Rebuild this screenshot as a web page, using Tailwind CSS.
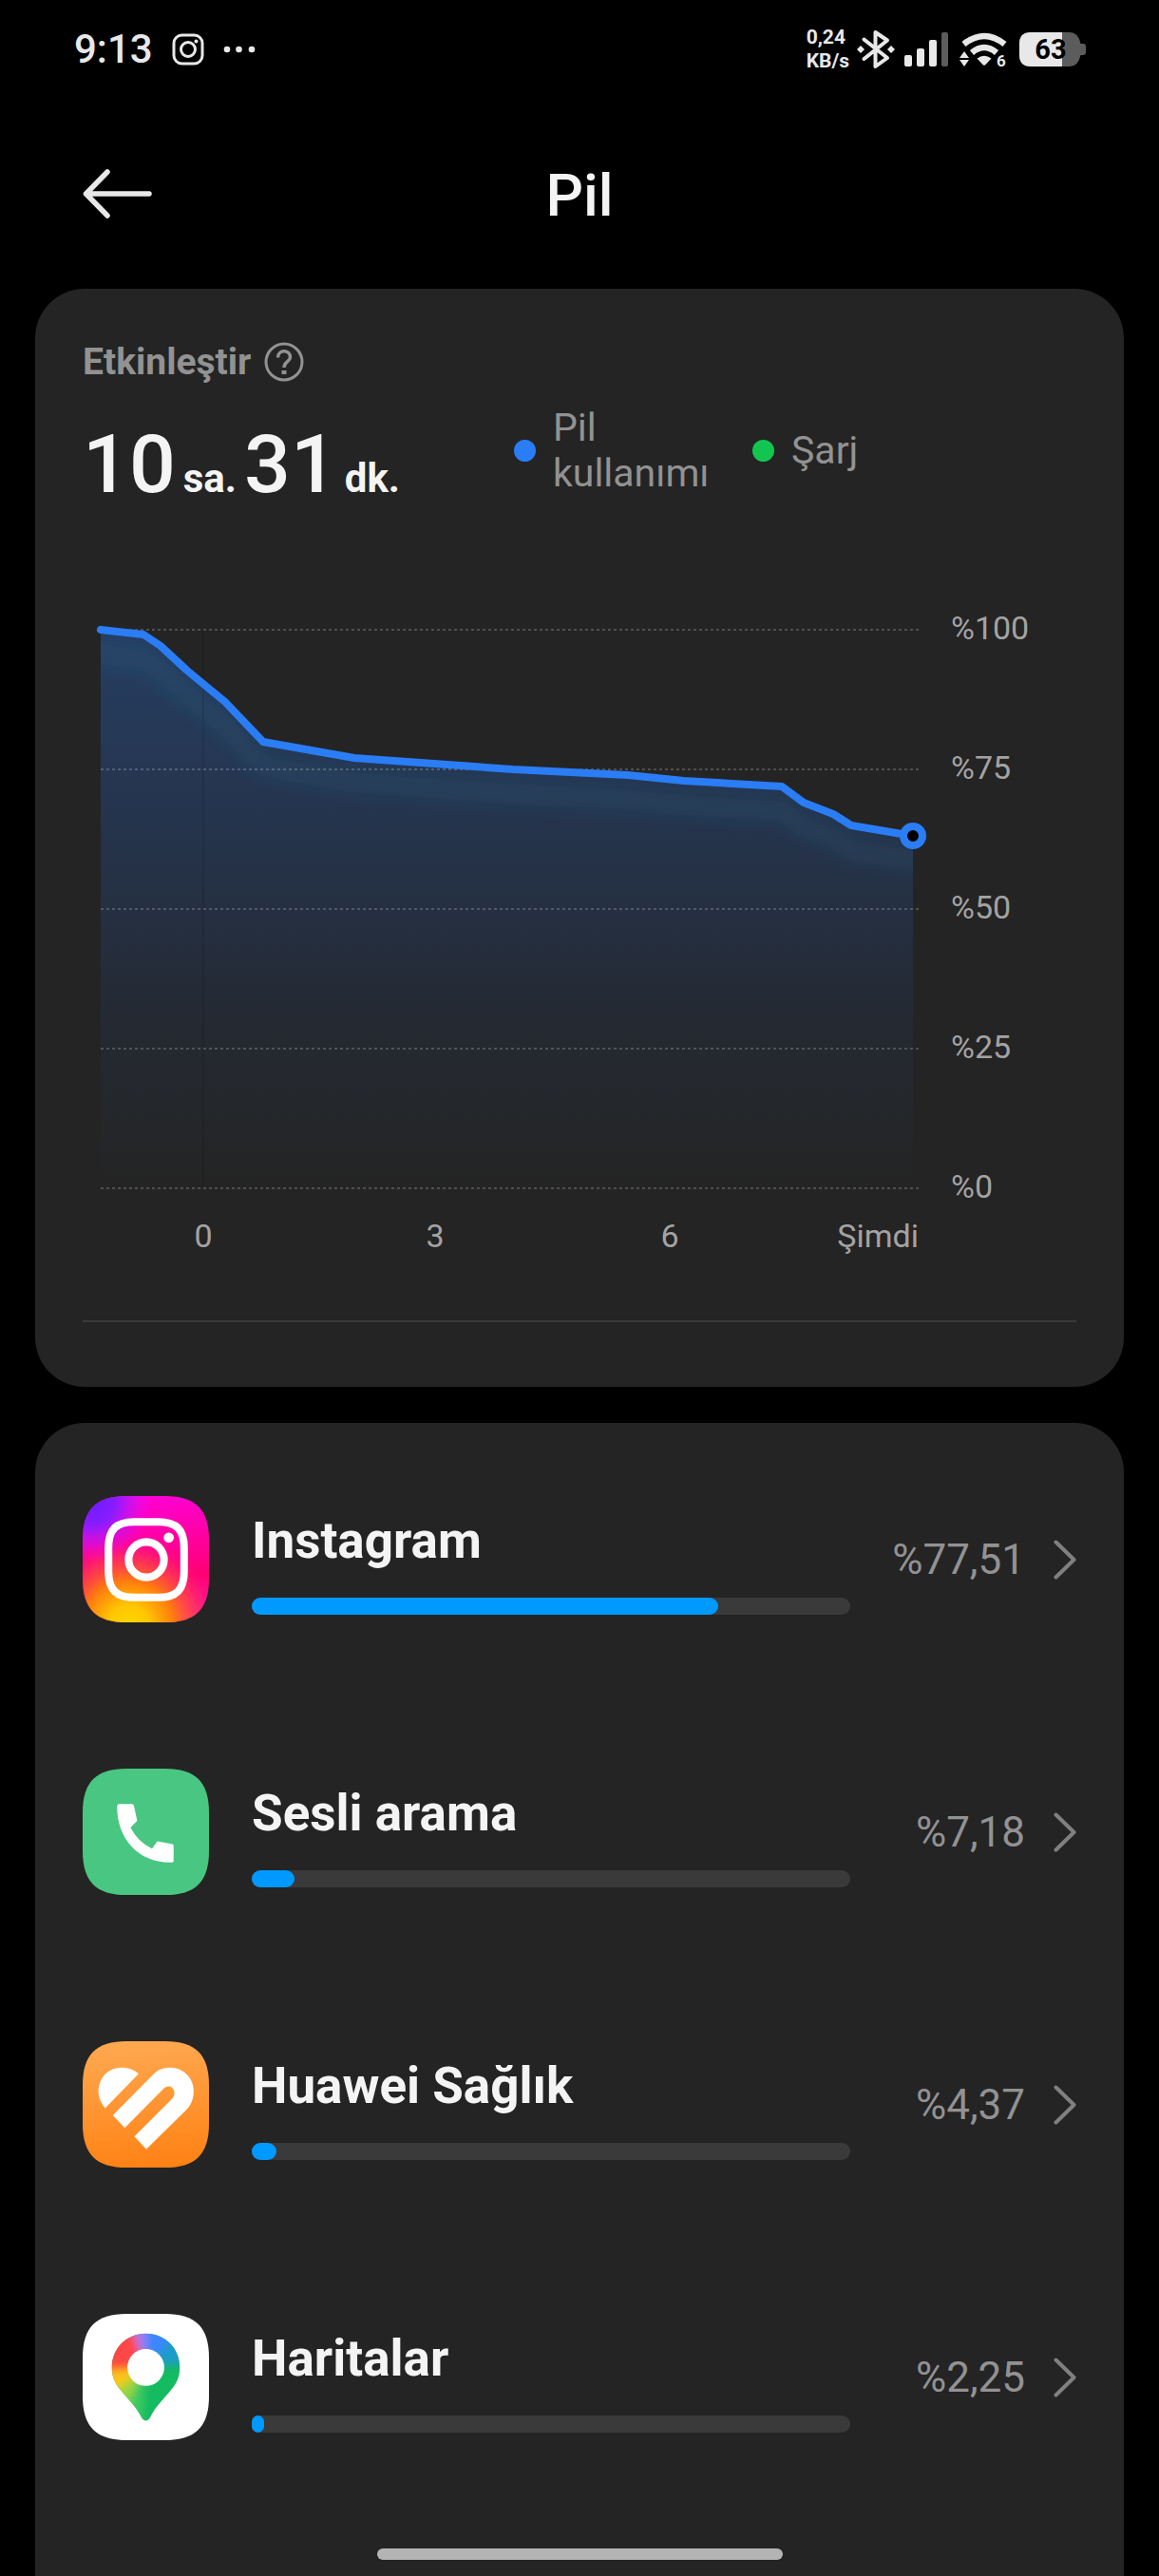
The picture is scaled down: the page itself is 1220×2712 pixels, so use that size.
<!DOCTYPE html>
<html lang="tr">
<head>
  <meta charset="UTF-8">
  <meta name="viewport" content="width=device-width, initial-scale=1.0">
  <title>Pil</title>
  <script src="https://cdn.jsdelivr.net/npm/@tailwindcss/browser@4"></script>
</head>
<body class="h-screen overflow-hidden bg-black font-[Roboto,sans-serif] text-[#f4f4f4] flex flex-col">

  <!-- STATUS BAR -->
  <div class="h-[104px] shrink-0 flex items-center pl-[78px] pr-[77px] text-[#e8e8e8]">
    <span class="text-[42px] leading-none font-medium">9:13</span>
    <svg class="ml-5 size-[34px]" viewBox="0 0 34 34" fill="none" stroke="currentColor" stroke-width="3">
      <rect x="2" y="2" width="30" height="30" rx="8.5"/>
      <circle cx="17" cy="17" r="7.5"/>
      <circle cx="25.500" cy="8.500" r="2" fill="currentColor" stroke="none"/>
    </svg>
    <svg class="ml-5 w-[34px] h-2" viewBox="0 0 34 8" fill="currentColor">
      <circle cx="4" cy="4" r="3.300"/><circle cx="16.500" cy="4" r="3.300"/><circle cx="30" cy="4" r="3.300"/>
    </svg>
    <div class="ml-auto flex items-center">
      <div class="text-[21px] leading-[25px] font-bold">
        <div>0,24</div>
        <div>KB/s</div>
      </div>
      <svg class="ml-2 w-10 h-[44px]" viewBox="0 0 40 44" fill="none" stroke="currentColor" stroke-width="4" stroke-linejoin="round" stroke-linecap="round">
        <path d="M7.500 11.500L32 31 19.500 40V4L32 12.500 7.500 32"/>
        <path d="M4 18l4 4-4 4-4-4zM36 18l4 4-4 4-4-4z" fill="currentColor" stroke="none"/>
      </svg>
      <svg class="ml-[10px] w-[46px] h-9" viewBox="0 0 46 36" fill="currentColor">
        <rect x="0" y="24" width="8" height="12" rx="2"/>
        <rect x="13" y="17" width="8" height="19" rx="2"/>
        <rect x="26" y="8" width="8" height="28" rx="2"/>
        <rect x="39" y="0" width="7" height="36" rx="2" fill="#5c5c5c"/>
      </svg>
      <svg class="ml-3 w-[50px] h-9 overflow-visible" viewBox="0 0 50 36" fill="currentColor">
        <path d="M4.500 12.500Q26 -4.500 47.500 12.500" fill="none" stroke="currentColor" stroke-width="6.500"/>
        <path d="M13 21.500Q26 10.500 39 21.500" fill="none" stroke="currentColor" stroke-width="6.500"/>
        <path d="M18.500 27.500Q26 22 33.500 27.500L28 33.500Q26 36 24 33.500Z"/>
        <path d="M5 20l5 7H0zM5 36l5-7H0z"/>
        <text x="39" y="36" font-size="17" font-weight="700">6</text>
      </svg>
      <div class="relative ml-[13px] w-[70px] h-9">
        <svg class="w-full h-full" viewBox="0 0 70 36">
          <path d="M12 0H53Q62 0 64.500 12H67Q70 12 70 15V21Q70 24 67 24H64.500Q62 36 53 36H12Q0 36 0 24V12Q0 0 12 0Z" fill="#5c5c5c"/>
          <path d="M12 0H45V36H12Q0 36 0 24V12Q0 0 12 0Z" fill="#e8e8e8"/>
        </svg>
        <span class="absolute inset-0 pr-1 flex items-center justify-center text-[29px] leading-none font-bold text-black">63</span>
      </div>
    </div>
  </div>

  <!-- HEADER -->
  <header class="h-[200px] shrink-0 px-[87px] grid grid-cols-3 items-center">
    <button type="button" aria-label="Geri" class="w-[74px] h-[52px]">
      <svg class="w-full h-full" viewBox="0 0 74 52" fill="none" stroke="#e8e8e8" stroke-width="5.500" stroke-linecap="round" stroke-linejoin="round">
        <path d="M26 3L3.500 26 26 49M3.500 26H70"/>
      </svg>
    </button>
    <h1 class="pt-1 text-center text-[62px] leading-none font-medium">Pil</h1>
  </header>

  <main class="grow min-h-0 px-[37px] flex flex-col gap-[38px]">

    <!-- GRAFIK -->
    <section class="shrink-0 rounded-[52px] bg-[#242424] px-[50px] pt-[52px] pb-[68px]">
      <div class="flex items-center gap-[14px] text-[#929292]">
        <h2 class="text-[39px] leading-[50px] font-bold">Etkinleştir</h2>
        <button type="button" aria-label="Yardım">
          <svg class="size-[42px]" viewBox="0 0 42 42" fill="none" stroke="currentColor" stroke-width="3">
            <circle cx="21" cy="21" r="19"/>
            <path d="M14.500 16.500C14.500 7.500 27.500 7.500 27.500 16C27.500 21 21 20.500 21 27" stroke-width="3.500"/>
            <path d="M18.500 30h5v4h-5z" fill="currentColor" stroke="none"/>
          </svg>
        </button>
      </div>

      <div class="mt-2 h-[120px] flex items-center">
        <p class="w-[454px] pt-8 flex items-baseline font-bold text-[42px] whitespace-nowrap">
          <span class="text-[86px] leading-none font-medium">10</span>
          <span class="ml-2">sa.</span>
          <span class="ml-2 text-[86px] leading-none font-medium">31</span>
          <span class="ml-2">dk.</span>
        </p>
        <div class="flex items-center text-[41px] leading-[48px] text-[#929292]">
          <span class="size-[23px] rounded-full bg-[#2a7df5]"></span>
          <span class="ml-[18px] w-[210px]">Pil kullanımı</span>
          <span class="size-[23px] rounded-full bg-[#13c550]"></span>
          <span class="ml-[18px]">Şarj</span>
        </div>
      </div>

      <svg class="mt-[106px] w-full h-auto" viewBox="0 0 1046 690" font-size="34" fill="#a3a3a3">
        <defs>
          <linearGradient id="fill" x1="0" y1="23" x2="0" y2="611" gradientUnits="userSpaceOnUse">
            <stop offset="0" stop-color="#2a7df5" stop-opacity=".3"/>
            <stop offset=".4" stop-color="#2a74f0" stop-opacity=".18"/>
            <stop offset=".7" stop-color="#2a74f0" stop-opacity=".07"/>
            <stop offset="1" stop-color="#2a7df5" stop-opacity="0"/>
          </linearGradient>
          <clipPath id="area">
            <path d="M19 23L64 28 82 40 110 66 150 99 190 141 286 158 453 170 574 176 633 182 736 188 759 205 790 217 809 229 874 240V611H19Z"/>
          </clipPath>
          <filter id="soft" x="-10%" y="-30%" width="120%" height="160%"><feGaussianBlur stdDeviation="9"/></filter>
        </defs>
        <path d="M19 23L64 28 82 40 110 66 150 99 190 141 286 158 453 170 574 176 633 182 736 188 759 205 790 217 809 229 874 240V611H19Z" fill="url(#fill)"/>
        <g clip-path="url(#area)">
          <path transform="translate(0 26)" d="M-20 20L19 23 64 28 82 40 110 66 150 99 190 141 286 158 453 170 574 176 633 182 736 188 759 205 790 217 809 229 874 240 900 244" fill="none" stroke="#287090" stroke-opacity=".2" stroke-width="20" filter="url(#soft)"/>
        </g>
        <path d="M127 23V611" stroke="#000" stroke-opacity=".2" stroke-width="1"/>
        <path d="M19 23H880M19 170H880M19 317H880M19 464H880M19 611H880" stroke="#fff" stroke-opacity=".2" stroke-width="2" stroke-dasharray="3 3"/>
        <path d="M19 23L64 28 82 40 110 66 150 99 190 141 286 158 453 170 574 176 633 182 736 188 759 205 790 217 809 229 874 240" fill="none" stroke="#2a7df5" stroke-width="8" stroke-linecap="round" stroke-linejoin="round"/>
        <circle cx="874" cy="240" r="10" fill="#000" stroke="#2a7df5" stroke-width="8"/>
        <text x="914" y="33">%100</text>
        <text x="914" y="180">%75</text>
        <text x="914" y="327">%50</text>
        <text x="914" y="474">%25</text>
        <text x="914" y="621">%0</text>
        <g text-anchor="middle">
          <text x="127" y="673">0</text>
          <text x="371" y="673">3</text>
          <text x="618" y="673">6</text>
        </g>
        <text x="880" y="673" text-anchor="end">Şimdi</text>
      </svg>
      <hr class="mt-[60px] border-t-2 border-[#3a3a3a]">
    </section>

    <!-- UYGULAMALAR -->
    <section class="grow min-h-0 overflow-hidden rounded-t-[52px] bg-[#242424] px-[50px]">
      <ul>
        <li>
          <a href="#" class="h-[287px] flex items-center">
            <svg class="size-[133px] shrink-0" viewBox="0 0 132 132">
              <defs>
                <clipPath id="tile"><path d="M0 46C0 14 14 0 46 0H86C118 0 132 14 132 46V86C132 118 118 132 86 132H46C14 132 0 118 0 86Z"/></clipPath>
                <linearGradient id="igBase" x1=".6" y1="0" x2=".7" y2="1">
                  <stop offset="0" stop-color="#ff00d4"/><stop offset=".65" stop-color="#ff0073"/><stop offset="1" stop-color="#ff1fb0"/>
                </linearGradient>
                <radialGradient id="igWarm" cx="48" cy="136" r="96" gradientUnits="userSpaceOnUse">
                  <stop offset="0" stop-color="#ffd600"/><stop offset=".22" stop-color="#ffc800"/><stop offset=".5" stop-color="#ff7a10"/><stop offset=".75" stop-color="#ff3a50" stop-opacity=".7"/><stop offset="1" stop-color="#ff0080" stop-opacity="0"/>
                </radialGradient>
                <radialGradient id="igCool" cx="10" cy="6" r="62" gradientUnits="userSpaceOnUse">
                  <stop offset="0" stop-color="#6a1cff"/><stop offset=".4" stop-color="#8a1cff"/><stop offset="1" stop-color="#e015ff" stop-opacity="0"/>
                </radialGradient>
              </defs>
              <g clip-path="url(#tile)">
                <path d="M0 0h132v132H0z" fill="url(#igBase)"/>
                <path d="M0 0h132v132H0z" fill="url(#igWarm)"/>
                <path d="M0 0h132v132H0z" fill="url(#igCool)"/>
              </g>
              <path d="M54 27H79C98 27 106 35 106 54V79C106 98 98 106 79 106H54C35 106 27 98 27 79V54C27 35 35 27 54 27Z" fill="none" stroke="#fff" stroke-width="8"/>
              <circle cx="66.500" cy="66.500" r="18.500" fill="none" stroke="#fff" stroke-width="8"/>
              <circle cx="90" cy="43.500" r="5.300" fill="#fff"/>
            </svg>
            <div class="ml-[45px] grow">
              <h3 class="text-[53px] leading-[76px] font-bold">Instagram</h3>
              <div class="mt-[22px] h-[18px] rounded-full bg-[#3a3a3a]"><div class="h-full rounded-full bg-[#0099ff]" style="width:78%"></div></div>
            </div>
            <span class="w-[184px] shrink-0 text-right text-[44px] text-[#929292]">%77,51</span>
            <svg class="ml-[30px] w-6 h-[42px] shrink-0" viewBox="0 0 24 42" fill="none" stroke="#808080" stroke-width="4" stroke-linecap="round" stroke-linejoin="round"><path d="M2.500 2.500L21.500 21 2.500 39.500"/></svg>
          </a>
        </li>
        <li>
          <a href="#" class="h-[287px] flex items-center">
            <svg class="size-[133px] shrink-0" viewBox="0 0 132 132">
              <path d="M0 46C0 14 14 0 46 0H86C118 0 132 14 132 46V86C132 118 118 132 86 132H46C14 132 0 118 0 86Z" fill="#49c681"/>
              <path d="M38 37H51.500Q53 37 53.500 38.500L57 54.500 50 61.500Q58 77 72.500 83.500L78 76 94 79Q95 79.500 95 81V96.500Q95 98 93 98C59 99 36 74 36 40Q36 37 38 37Z" fill="#fff"/>
            </svg>
            <div class="ml-[45px] grow">
              <h3 class="text-[53px] leading-[76px] font-bold">Sesli arama</h3>
              <div class="mt-[22px] h-[18px] rounded-full bg-[#3a3a3a]"><div class="h-full rounded-full bg-[#0099ff]" style="width:7.18%"></div></div>
            </div>
            <span class="w-[184px] shrink-0 text-right text-[44px] text-[#929292]">%7,18</span>
            <svg class="ml-[30px] w-6 h-[42px] shrink-0" viewBox="0 0 24 42" fill="none" stroke="#808080" stroke-width="4" stroke-linecap="round" stroke-linejoin="round"><path d="M2.500 2.500L21.500 21 2.500 39.500"/></svg>
          </a>
        </li>
        <li>
          <a href="#" class="h-[287px] flex items-center">
            <svg class="size-[133px] shrink-0" viewBox="0 0 132 132">
              <defs>
                <linearGradient id="health" x1=".45" y1="0" x2=".55" y2="1"><stop offset="0" stop-color="#ffa850"/><stop offset="1" stop-color="#ff8214"/></linearGradient>
              </defs>
              <path d="M0 46C0 14 14 0 46 0H86C118 0 132 14 132 46V86C132 118 118 132 86 132H46C14 132 0 118 0 86Z" fill="url(#health)"/>
              <path d="M58.500 34L23.500 70C18.500 64 16.500 58 16.500 52C16.500 38 27 27.500 41 27.500C48 27.500 54 30 58.500 34Z" fill="#fff"/>
              <path d="M31.500 77.500L74 34.500C79 29.500 84 27.500 91 27.500C105 27.500 116 38 116 52C116 60 113 67 108.500 71.500L66.500 113 54 99.500 93.500 60C100 53 92 42 84 50L44 90.500Z" fill="#fff"/>
            </svg>
            <div class="ml-[45px] grow">
              <h3 class="text-[53px] leading-[76px] font-bold">Huawei Sağlık</h3>
              <div class="mt-[22px] h-[18px] rounded-full bg-[#3a3a3a]"><div class="h-full rounded-full bg-[#0099ff]" style="width:4.2%"></div></div>
            </div>
            <span class="w-[184px] shrink-0 text-right text-[44px] text-[#929292]">%4,37</span>
            <svg class="ml-[30px] w-6 h-[42px] shrink-0" viewBox="0 0 24 42" fill="none" stroke="#808080" stroke-width="4" stroke-linecap="round" stroke-linejoin="round"><path d="M2.500 2.500L21.500 21 2.500 39.500"/></svg>
          </a>
        </li>
        <li>
          <a href="#" class="h-[287px] flex items-center">
            <svg class="size-[133px] shrink-0" viewBox="0 0 132 132">
              <defs>
                <clipPath id="pin"><path d="M66 20.500C86 20.500 101.500 36 101.500 56C101.500 66 98 73 92 80C84 90 76 97 71 107.500C68.500 113 63.500 113 61 107.500C56 97 48 90 40 80C34 73 30.500 66 30.500 56C30.500 36 46 20.500 66 20.500Z"/></clipPath>
                <filter id="mix" x="-20%" y="-20%" width="140%" height="140%"><feGaussianBlur stdDeviation="4"/></filter>
              </defs>
              <path d="M0 46C0 14 14 0 46 0H86C118 0 132 14 132 46V86C132 118 118 132 86 132H46C14 132 0 118 0 86Z" fill="#fff"/>
              <g clip-path="url(#pin)">
                <path d="M20 10h92v112H20z" fill="#14bb60"/>
                <g filter="url(#mix)">
                  <path d="M66 56L64 0H100L110 24Z" fill="#3a86ff"/>
                  <path d="M66 56L104 14 130 36V50Z" fill="#1a9cc8"/>
                  <path d="M66 56L42 0H66Z" fill="#a07af0"/>
                  <path d="M66 56L0 50V0H46Z" fill="#ff4646"/>
                  <path d="M66 56L0 46V66Z" fill="#ff5030"/>
                  <path d="M66 56L0 62V100L20 96Z" fill="#fbc618"/>
                  <path d="M66 56L24 88 44 110Z" fill="#98d63c"/>
                  <path d="M66 56L46 96 62 122Z" fill="#3cc862"/>
                </g>
              </g>
              <circle cx="66" cy="56" r="19.300" fill="#fff"/>
            </svg>
            <div class="ml-[45px] grow">
              <h3 class="text-[53px] leading-[76px] font-bold">Haritalar</h3>
              <div class="mt-[22px] h-[18px] rounded-full bg-[#3a3a3a]"><div class="h-full rounded-full bg-[#0099ff]" style="width:2.1%"></div></div>
            </div>
            <span class="w-[184px] shrink-0 text-right text-[44px] text-[#929292]">%2,25</span>
            <svg class="ml-[30px] w-6 h-[42px] shrink-0" viewBox="0 0 24 42" fill="none" stroke="#808080" stroke-width="4" stroke-linecap="round" stroke-linejoin="round"><path d="M2.500 2.500L21.500 21 2.500 39.500"/></svg>
          </a>
        </li>
      </ul>
    </section>
  </main>

  <!-- gesture bar -->
  <div class="fixed bottom-[17px] inset-x-0 mx-auto w-[35%] h-3 rounded-full bg-[#b4b4b4]"></div>
</body>
</html>
